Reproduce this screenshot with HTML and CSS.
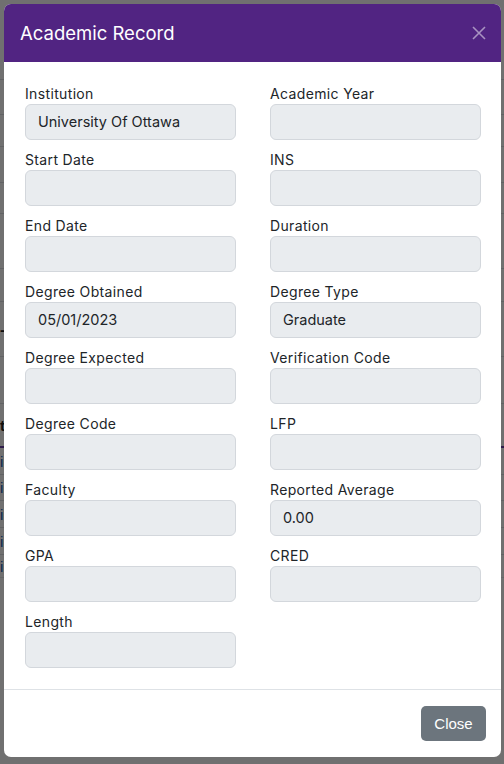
FILE: index.html
```html
<!DOCTYPE html>
<html lang="en">
<head>
<meta charset="utf-8">
<title>Academic Record</title>
<link rel="stylesheet" href="styles.css">
</head>
<body>
<div class="page">
  <div class="bg-row h80"></div>
  <div class="bg-row h35"></div>
  <div class="bg-row h32"></div>
  <div class="bg-row h36"></div>
  <div class="bg-row h31"></div>
  <div class="bg-row h55"></div>
  <div class="bg-row h33"></div>
  <div class="bg-row h55"><span class="dash">-</span></div>
  <div class="bg-row h47"></div>
  <div class="bg-row h44 bg-head"><span class="bg-text dark">t</span></div>
  <div class="bg-row h27"><span class="bg-text link">i</span></div>
  <div class="bg-row h26"><span class="bg-text link">i</span></div>
  <div class="bg-row h27"><span class="bg-text link">i</span></div>
  <div class="bg-row h27"><span class="bg-text link">i</span></div>
  <div class="bg-row h23"><span class="bg-text link">i</span></div>
</div>

<div class="backdrop">
  <div class="modal" role="dialog" aria-labelledby="modal-title">
    <div class="modal-header">
      <h5 class="modal-title" id="modal-title">Academic Record</h5>
      <button class="btn-x" aria-label="Close">
        <svg width="14" height="14" viewBox="0 0 14 14"><path d="M1 1L13 13M13 1L1 13" stroke="currentColor" stroke-width="1.6" fill="none"/></svg>
      </button>
    </div>
    <div class="modal-body">
      <div class="fields">
        <div class="field"><label>Institution</label><div class="input">University Of Ottawa</div></div>
        <div class="field"><label>Academic Year</label><div class="input"></div></div>
        <div class="field"><label>Start Date</label><div class="input"></div></div>
        <div class="field"><label>INS</label><div class="input"></div></div>
        <div class="field"><label>End Date</label><div class="input"></div></div>
        <div class="field"><label>Duration</label><div class="input"></div></div>
        <div class="field"><label>Degree Obtained</label><div class="input">05/01/2023</div></div>
        <div class="field"><label>Degree Type</label><div class="input">Graduate</div></div>
        <div class="field"><label>Degree Expected</label><div class="input"></div></div>
        <div class="field"><label>Verification Code</label><div class="input"></div></div>
        <div class="field"><label>Degree Code</label><div class="input"></div></div>
        <div class="field"><label>LFP</label><div class="input"></div></div>
        <div class="field"><label>Faculty</label><div class="input"></div></div>
        <div class="field"><label>Reported Average</label><div class="input">0.00</div></div>
        <div class="field"><label>GPA</label><div class="input"></div></div>
        <div class="field"><label>CRED</label><div class="input"></div></div>
        <div class="field"><label>Length</label><div class="input"></div></div>
      </div>
    </div>
    <div class="modal-footer">
      <button class="btn-close">Close</button>
    </div>
  </div>
</div>
</body>
</html>
```

FILE: styles.css
```css
* { box-sizing: border-box; }
html, body { margin: 0; padding: 0; }
body {
  width: 504px;
  height: 764px;
  overflow: hidden;
  background: #ffffff;
  font-family: "Inter", "Noto Sans", sans-serif;
  color: #212529;
}

/* page behind the modal */
.page { width: 504px; }
.bg-row {
  border-bottom: 1px solid #dcdfe3;
  display: flex;
  align-items: center;
  font-family: "Liberation Sans", Arial, sans-serif;
  font-size: 15px;
}
.h80 { height: 80px; }
.h35 { height: 35px; }
.h32 { height: 32px; }
.h36 { height: 36px; }
.h31 { height: 31px; }
.h55 { height: 55px; }
.h33 { height: 33px; }
.h47 { height: 47px; }
.h44 { height: 44px; }
.h27 { height: 27px; }
.h26 { height: 26px; }
.h23 { height: 23px; border-bottom-color: #e6e8eb; }
.bg-head { border-bottom: 2px solid #6a3fa8; }
.bg-text { margin-left: 0; }
.dark { color: #222; font-weight: bold; }
.link { color: #1a5fb4; }
.dash { margin-left: 0; color: #222; font-weight: bold; }

/* overlay */
.backdrop {
  position: fixed;
  inset: 0;
  background: rgba(0, 0, 0, 0.56);
}
.modal {
  margin: 4px 0 0 4px;
  width: 497px;
  background: #fff;
  border-radius: 7px;
  overflow: hidden;
}
.modal-header {
  height: 58px;
  background: #512482;
  display: flex;
  align-items: center;
  justify-content: space-between;
  padding: 0 15px 0 16px;
}
.modal-title {
  margin: 0;
  color: #ffffff;
  font-size: 18.5px;
  font-weight: 400;
}
.btn-x {
  border: 0;
  background: none;
  padding: 0;
  color: rgba(255, 255, 255, 0.5);
  width: 14px;
  height: 14px;
  display: flex;
}

.modal-body {
  padding: 21px 20px 21px 21px;
}
.fields {
  display: grid;
  grid-template-columns: 211px 211px;
  column-gap: 34px;
  row-gap: 9px;
}
.field label {
  display: block;
  font-size: 14px;
  line-height: 21px;
  letter-spacing: 0.35px;
  color: #212529;
}
.input {
  height: 36px;
  background: #e9ecef;
  border: 1px solid #d3d7dc;
  border-radius: 6px;
  padding: 0 12px;
  font-size: 14.5px;
  line-height: 34px;
  color: #212529;
}

.modal-footer {
  border-top: 1px solid #dee2e6;
  padding: 16px 15px 16px 16px;
  display: flex;
  justify-content: flex-end;
}
.btn-close {
  height: 35px;
  width: 65px;
  border: 0;
  border-radius: 5px;
  background: #6c757d;
  color: #ffffff;
  font-family: "Liberation Sans", Arial, sans-serif;
  font-size: 15px;
  padding: 0;
}
```
